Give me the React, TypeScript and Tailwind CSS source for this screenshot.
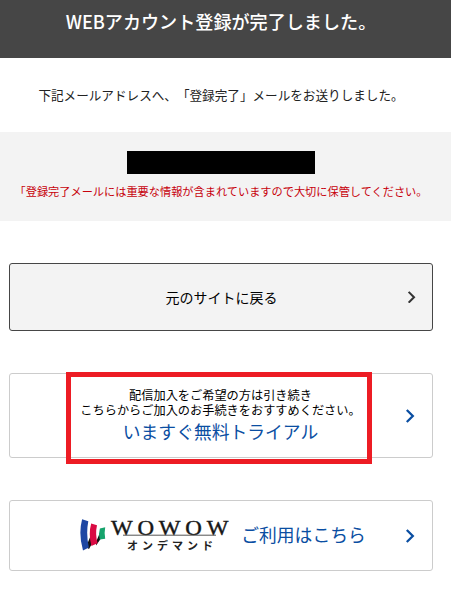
import type { ReactNode } from "react";

function Chevron({ className }: { className: string }) {
  return (
    <svg
      className={"shrink-0 " + className}
      viewBox="0 0 10 14"
      fill="none"
      stroke="currentColor"
      strokeWidth="2.3"
    >
      <path d="M1.8 1 7.8 7l-6 6" />
    </svg>
  );
}

function LinkCard({
  className,
  chevron,
  children,
}: {
  className: string;
  chevron: string;
  children: ReactNode;
}) {
  return (
    <a
      className={
        "ml-[9px] flex w-[424px] items-center rounded-[3px] border pl-[26px] pr-[16px] " +
        className
      }
    >
      <div className="flex flex-1 flex-col items-center whitespace-nowrap">{children}</div>
      <Chevron className={chevron} />
    </a>
  );
}

function Logo() {
  return (
    <svg className="shrink-0" width="152" height="40" viewBox="0 0 152 40">
      <path d="M7 31 14 14 15 24 10 33ZM17 26 22.5 13 23 21 17 29.5Z" fill="#111" />
      <path d="M3.1 3.2 9.3 5.2Q6.8 18 9.9 31.5L4 34.5Q-0.8 18 3.1 3.2Z" fill="#1d46a3" />
      <path d="M12.2 7.4 18 9.2Q16 18 18.6 27.2L12.4 30Q9.2 18 12.2 7.4Z" fill="#d90b43" />
      <path d="M20.9 12.6 26.2 11.2Q25 17.5 26.2 22.8L20.7 23.6Q19.2 18 20.9 12.6Z" fill="#16a36c" />
      <text
        transform="scale(1.12 1)"
        x="28.5"
        y="19.3"
        fontSize="20.5"
        textLength="104.8"
        lengthAdjust="spacing"
        fill="#171717"
        stroke="#171717"
        strokeWidth="0.4"
        className="font-['Liberation_Serif',serif]"
      >
        WOWOW
      </text>
      <path d="M44 19.2H137" stroke="#555" strokeWidth="1" />
      <text
        x="48"
        y="34"
        fontSize="11"
        fontWeight="600"
        textLength="86"
        lengthAdjust="spacing"
        fill="#222"
        className="font-['Noto_Sans_CJK_JP',sans-serif]"
      >
        オンデマンド
      </text>
    </svg>
  );
}

export default function App() {
  return (
    <div className="h-[596px] w-[451px] overflow-hidden bg-white font-['Noto_Sans_CJK_JP',sans-serif] text-[#222] [text-spacing-trim:space-all]">
      <header className="h-[58px] bg-[#464646] pr-[9px] pt-[7px] text-center text-[18.1px] font-medium leading-[28px] text-white">
        <h1>WEBアカウント登録が完了しました。</h1>
      </header>
      <p className="h-[74px] whitespace-nowrap pr-[9px] pt-[27px] text-center text-[12.6px] leading-[20px]">
        下記メールアドレスへ、「登録完了」メールをお送りしました。
      </p>
      <section className="flex h-[89px] flex-col items-center bg-[#f3f3f3] pr-[9px] pt-[19px]">
        <div className="h-[23px] w-[188px] bg-black" />
        <p className="mt-[7px] whitespace-nowrap text-[11.2px] leading-[20px] text-[#c7000b]">
          「登録完了メールには重要な情報が含まれていますので大切に保管してください。
        </p>
      </section>
      <LinkCard
        className="mt-[42px] h-[68px] border-[#464646] bg-[#f3f3f3]"
        chevron="h-[12.5px] w-[9px] text-[#333]"
      >
        <span className="text-[14px] leading-[20px] text-black">元のサイトに戻る</span>
      </LinkCard>
      <div className="relative mt-[42px]">
        <LinkCard className="h-[85px] border-[#ccc]" chevron="mr-px h-[14px] w-[10px] text-[#0a4ea2]">
          <span className="text-[12.2px] leading-[15px] text-black">配信加入をご希望の方は引き続き</span>
          <span className="text-[12.2px] leading-[15px] text-black">
            こちらからご加入のお手続きをおすすめください。
          </span>
          <span className="text-[17.8px] leading-[26px] text-[#0a4ea2]">いますぐ無料トライアル</span>
        </LinkCard>
        <div className="absolute left-[66px] top-[-1px] h-[92px] w-[306px] border-[5px] border-[#ed1c24]" />
      </div>
      <LinkCard
        className="mt-[42px] h-[71px] border-[#ccc]"
        chevron="mr-px h-[14px] w-[10px] text-[#0a4ea2]"
      >
        <div className="flex items-center gap-[10px] pl-[4px]">
          <Logo />
          <span className="pb-[3px] text-[17.8px] leading-[28px] text-[#0a4ea2]">ご利用はこちら</span>
        </div>
      </LinkCard>
    </div>
  );
}
